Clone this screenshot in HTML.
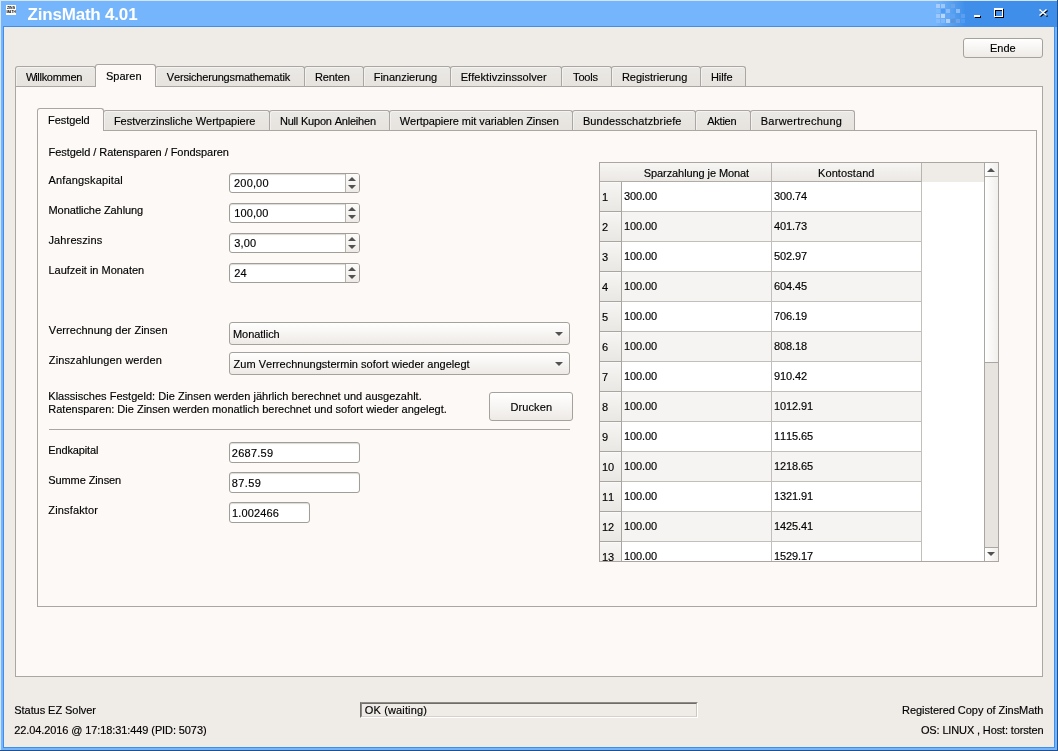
<!DOCTYPE html>
<html lang="de">
<head>
<meta charset="utf-8">
<title>ZinsMath 4.01</title>
<style>
*{box-sizing:border-box;margin:0;padding:0}
html,body{width:1058px;height:751px;overflow:hidden}
body{position:relative;background:#efebe7;font-family:"Liberation Sans",sans-serif;font-size:11px;color:#000;line-height:13px;font-kerning:none;-webkit-text-stroke:0.15px #000}
#root{position:absolute;left:0;top:0;width:1058px;height:751px;will-change:transform;overflow:hidden}
.abs{position:absolute}
#frame{position:absolute;left:0;top:0;width:1058px;height:751px;background:#75b5fb}
#edgeT{position:absolute;left:0;top:0;width:1058px;height:1px;background:#d4e5fa}
#edgeL{position:absolute;left:0;top:0;width:1px;height:751px;background:#d4e5fa}
#edgeR{position:absolute;left:1057px;top:0;width:1px;height:751px;background:#234f8c}
#edgeB{position:absolute;left:0;top:750px;width:1058px;height:1px;background:#234f8c}
#client{position:absolute;left:3px;top:26px;width:1052px;height:722px;background:#efebe7;border:1px solid #3e8eea}
#titlegrad{position:absolute;left:936px;top:1px;width:121px;height:26px;background:linear-gradient(90deg,#75b5fb 0,#3f8fea 29px,#3f8fea 100%)}
#title{-webkit-text-stroke:0;position:absolute;top:5px;font-size:17px;line-height:20px;font-weight:bold;color:#fff;white-space:nowrap}
#appicon{position:absolute;left:6px;top:5px;width:10px;height:10px;font-family:"Liberation Sans",sans-serif}
.lbl{position:absolute;white-space:nowrap;height:13px;line-height:13px}
.btn{position:absolute;border:1px solid #a5a19b;border-radius:3px;background:linear-gradient(#ffffff 0,#f8f6f4 45%,#edeae6 100%);white-space:nowrap}
.btn span{position:absolute;line-height:13px}
.tab{position:absolute;border:1px solid #aaa7a2;border-bottom:none;border-radius:3px 3px 0 0;background:linear-gradient(#ebe9e5,#e6e3df);white-space:nowrap;box-shadow:inset 1px 1px 0 rgba(255,255,255,.45)}
.tab.sel{background:#fcf9f6;z-index:3}
.panel{position:absolute;border:1px solid #aaa7a2;background:#fcf9f6}
.field{position:absolute;border:1px solid #a19d98;border-radius:3px;background:#fff;box-shadow:inset 0 1px 1px #dcdad6;white-space:nowrap}
.field span{position:absolute;top:3px;line-height:13px}
.spinbtn{position:absolute;right:0;top:0;width:14px;height:18px;border-left:1px solid #b5b1ac;background:linear-gradient(#fdfcfb,#eeebe7);border-radius:0 2px 2px 0}
.up{position:absolute;left:2px;top:3px;width:0;height:0;border-left:4px solid transparent;border-right:4px solid transparent;border-bottom:4px solid #525252}
.down{position:absolute;left:2px;top:11px;width:0;height:0;border-left:4px solid transparent;border-right:4px solid transparent;border-top:4px solid #525252}
.combo{position:absolute;border:1px solid #a5a19b;border-radius:3px;background:linear-gradient(#ffffff 0,#f8f6f4 45%,#edeae6 100%);white-space:nowrap}
.combo span{position:absolute;top:5px;line-height:13px}
.combo i{position:absolute;right:6px;top:9px;width:0;height:0;border-left:4px solid transparent;border-right:4px solid transparent;border-top:4px solid #525252}
#tbl{position:absolute;left:599px;top:162px;width:400px;height:400px;border:1px solid #aaa7a2;background:#fff;overflow:hidden}
#tbl .hdr{position:absolute;top:0;height:19px;background:linear-gradient(#f7f6f4,#ebe8e4);border-right:1px solid #b8b5b0;border-bottom:1px solid #b0ada8;white-space:nowrap}
#tbl .hdr span{position:absolute;top:4px;line-height:13px}
#tbl .rh{position:absolute;left:0;width:22px;height:30px;background:linear-gradient(#f7f6f4,#e9e7e3);border-right:1px solid #a9a6a1;border-bottom:1px solid #a9a6a1;box-shadow:inset 0 1px 0 #fbfaf9;padding:9px 0 0 2px;line-height:13px;white-space:nowrap}
#tbl .c{position:absolute;height:30px;border-right:1px solid #c2bfba;border-bottom:1px solid #c2bfba;padding:8px 0 0 2px;line-height:13px;white-space:nowrap;background:#fff}
#tbl .c.alt{background:#f5f4f2}
#okbox{position:absolute;left:360px;top:702px;width:338px;height:16px;border:1px solid;border-color:#8d8a87 #fff #fff #6e6c69;background:#efebe7}
#okbox div{position:absolute;left:0;top:0;width:336px;height:14px;border:1px solid;border-color:#6e6c69 #cbc8c4 #d5d2ce #8b8885}
#ok{position:absolute;top:1px;line-height:13px;white-space:nowrap}
</style>
</head>
<body>
<div id="root">
<div id="frame"></div><div id="titlegrad"></div>
<div id="edgeT"></div><div id="edgeL"></div><div id="edgeR"></div><div id="edgeB"></div>
<svg id="appicon" width="10" height="10" viewBox="0 0 10 10"><rect width="10" height="10" fill="#fff"/><text x="1" y="4.2" font-size="4.4" font-weight="bold" textLength="8" lengthAdjust="spacingAndGlyphs" fill="#000">ZINS</text><text x="0.4" y="8.2" font-size="4.4" font-weight="bold" textLength="9.4" lengthAdjust="spacingAndGlyphs" fill="#000">MATH</text></svg>
<div id="title" style="left:27.50px;letter-spacing:-0.194px">ZinsMath 4.01</div>
<div id="client"></div>
<svg class="abs" style="left:930px;top:0" width="128" height="27" viewBox="0 0 128 27" shape-rendering="crispEdges">
<rect x="6" y="4" width="4" height="4" fill="#a8cdfb"/>
<rect x="11" y="4" width="4" height="4" fill="#9cc8fb"/>
<rect x="21" y="4" width="4" height="4" fill="#6aa5e8"/>
<rect x="6" y="9" width="4" height="4" fill="#7dbafb"/>
<rect x="11" y="9" width="4" height="4" fill="#4d9bf5"/>
<rect x="16" y="9" width="4" height="4" fill="#8cbcf5"/>
<rect x="26" y="9" width="4" height="4" fill="#8cbcf5"/>
<rect x="6" y="14" width="4" height="4" fill="#9dc8fb"/>
<rect x="11" y="14" width="4" height="4" fill="#b8d6fb"/>
<rect x="16" y="14" width="4" height="4" fill="#63a6f5"/>
<rect x="21" y="14" width="4" height="4" fill="#5ea3f3"/>
<rect x="31" y="14" width="4" height="4" fill="#5c9fee"/>
<rect x="6" y="19" width="4" height="4" fill="#85bcfb"/>
<rect x="11" y="19" width="4" height="4" fill="#80b8f8"/>
<rect x="16" y="19" width="4" height="4" fill="#b0d0f8"/>
<rect x="21" y="19" width="4" height="4" fill="#5d94d6"/>
<rect x="26" y="19" width="4" height="4" fill="#6fa5e6"/>
<rect x="31" y="19" width="4" height="4" fill="#4d9bf5"/>
<rect x="45" y="16" width="6" height="2" fill="#000"/>
<rect x="44" y="15" width="6" height="2" fill="#fff"/>
<path d="M65 9h9v9h-9z M66 11v6h7v-6z" fill="#000" fill-rule="evenodd"/>
<path d="M64 8h9v9h-9z M65 10v6h7v-6z" fill="#fff" fill-rule="evenodd"/>
<g shape-rendering="auto"><path d="M110.5 10.5 L117.5 16.5 M117.5 10.5 L110.5 16.5" stroke="#000" stroke-width="1.5" fill="none"/>
<path d="M109.5 9.5 L116.5 15.5 M116.5 9.5 L109.5 15.5" stroke="#fff" stroke-width="1.5" fill="none"/></g>
</svg>
<div class="btn" style="left:963px;top:38px;width:80px;height:20px"><span id="ende" style="left:26.00px;top:3px;letter-spacing:-0.039px">Ende</span></div>
<div class="tab" id="ot0" style="left:15px;top:66px;width:81px;height:20px;padding:4px 0 0 10.00px;z-index:3;letter-spacing:-0.289px"><span style="letter-spacing:-1.2px">W</span>illkommen</div>
<div class="tab sel" id="ot1" style="left:95px;top:64px;width:61px;height:23px;padding:5px 0 0 9.90px;z-index:4;letter-spacing:0.042px">Sparen</div>
<div class="tab" id="ot2" style="left:155px;top:66px;width:150px;height:20px;padding:4px 0 0 10.80px;z-index:3;letter-spacing:-0.171px">Versicherungsmathematik</div>
<div class="tab" id="ot3" style="left:304px;top:66px;width:60px;height:20px;padding:4px 0 0 9.90px;z-index:3;letter-spacing:-0.118px">Renten</div>
<div class="tab" id="ot4" style="left:363px;top:66px;width:88px;height:20px;padding:4px 0 0 9.70px;z-index:3;letter-spacing:-0.013px">Finanzierung</div>
<div class="tab" id="ot5" style="left:450px;top:66px;width:112px;height:20px;padding:4px 0 0 9.70px;z-index:3;letter-spacing:0.057px">Effektivzinssolver</div>
<div class="tab" id="ot6" style="left:561px;top:66px;width:51px;height:20px;padding:4px 0 0 11.00px;z-index:3;letter-spacing:-0.230px"><span style="letter-spacing:-1.3px">T</span>ools</div>
<div class="tab" id="ot7" style="left:611px;top:66px;width:90px;height:20px;padding:4px 0 0 9.90px;z-index:3;letter-spacing:0.001px">Registrierung</div>
<div class="tab" id="ot8" style="left:700px;top:66px;width:46px;height:20px;padding:4px 0 0 9.90px;z-index:3;letter-spacing:-0.076px">Hilfe</div>
<div class="panel" style="left:15px;top:86px;width:1028px;height:591px"></div>
<div class="tab sel" id="it0" style="left:37px;top:108px;width:67px;height:23px;padding:5px 0 0 10.10px;z-index:5;letter-spacing:-0.081px">Festgeld</div>
<div class="tab" id="it1" style="left:103px;top:110px;width:167px;height:20px;padding:4px 0 0 9.90px;z-index:4;letter-spacing:-0.009px">Festverzinsliche Wertpapiere</div>
<div class="tab" id="it2" style="left:269px;top:110px;width:121px;height:20px;padding:4px 0 0 9.90px;z-index:4;letter-spacing:-0.194px">Null Kupon Anleihen</div>
<div class="tab" id="it3" style="left:389px;top:110px;width:184px;height:20px;padding:4px 0 0 9.80px;z-index:4;letter-spacing:-0.078px">Wertpapiere mit variablen Zinsen</div>
<div class="tab" id="it4" style="left:572px;top:110px;width:124px;height:20px;padding:4px 0 0 9.90px;z-index:4;letter-spacing:0.115px">Bundesschatzbriefe</div>
<div class="tab" id="it5" style="left:695px;top:110px;width:56px;height:20px;padding:4px 0 0 11.20px;z-index:4;letter-spacing:-0.235px">Aktien</div>
<div class="tab" id="it6" style="left:750px;top:110px;width:105px;height:20px;padding:4px 0 0 9.70px;z-index:4;letter-spacing:0.279px">Barwertrechung</div>
<div class="panel" style="left:37px;top:130px;width:1000px;height:477px;z-index:2"></div>
<div id="form" style="position:absolute;left:0;top:0;z-index:6">
<div class="lbl" id="l0" style="left:48.50px;top:146px;letter-spacing:-0.053px">Festgeld / Ratensparen / Fondsparen</div>
<div class="lbl" id="l1" style="left:48.50px;top:174px;letter-spacing:0.163px">Anfangskapital</div>
<div class="field" style="left:229px;top:173px;width:131px;height:20px"><span id="v0" style="left:4.10px;letter-spacing:0.153px">200,00</span><div class="spinbtn"><div class="up"></div><div class="down"></div></div></div>
<div class="lbl" id="l2" style="left:48.50px;top:204px;letter-spacing:-0.076px">Monatliche Zahlung</div>
<div class="field" style="left:229px;top:203px;width:131px;height:20px"><span id="v1" style="left:4.30px;letter-spacing:0.093px">100,00</span><div class="spinbtn"><div class="up"></div><div class="down"></div></div></div>
<div class="lbl" id="l3" style="left:48.50px;top:234px;letter-spacing:0.120px">Jahreszins</div>
<div class="field" style="left:229px;top:233px;width:131px;height:20px"><span id="v2" style="left:4.30px;letter-spacing:0.098px">3,00</span><div class="spinbtn"><div class="up"></div><div class="down"></div></div></div>
<div class="lbl" id="l4" style="left:48.50px;top:264px;letter-spacing:-0.017px">Laufzeit in Monaten</div>
<div class="field" style="left:229px;top:263px;width:131px;height:20px"><span id="v3" style="left:4.30px;letter-spacing:0.082px">24</span><div class="spinbtn"><div class="up"></div><div class="down"></div></div></div>
<div class="lbl" id="l5" style="left:48.80px;top:324px;letter-spacing:0.037px">Verrechnung der Zinsen</div>
<div class="combo" style="left:229px;top:322px;width:341px;height:23px"><span id="cb0" style="left:3.00px;letter-spacing:-0.045px">Monatlich</span><i></i></div>
<div class="lbl" id="l6" style="left:48.80px;top:354px;letter-spacing:0.124px">Zinszahlungen werden</div>
<div class="combo" style="left:229px;top:352px;width:341px;height:23px"><span id="cb1" style="left:3.60px;letter-spacing:0.014px">Zum Verrechnungstermin sofort wieder angelegt</span><i></i></div>
<div class="lbl" id="s0" style="left:48.30px;top:390px;letter-spacing:0.023px">Klassisches Festgeld: Die Zinsen werden jährlich berechnet und ausgezahlt.</div>
<div class="lbl" id="s1" style="left:48.30px;top:403px;letter-spacing:-0.002px">Ratensparen: Die Zinsen werden monatlich berechnet und sofort wieder angelegt.</div>
<div class="btn" style="left:489px;top:392px;width:84px;height:29px"><span id="drucken" style="left:20.50px;top:8px;letter-spacing:0.099px">Drucken</span></div>
<div class="abs" style="left:49px;top:429px;width:521px;height:1px;background:#aaa6a1"></div>
<div class="lbl" id="l7" style="left:48.30px;top:444px;letter-spacing:-0.137px">Endkapital</div>
<div class="field" style="left:229px;top:442px;width:131px;height:21px"><span id="o0" style="left:1.80px;top:4px;letter-spacing:0.258px">2687.59</span></div>
<div class="lbl" id="l8" style="left:48.30px;top:474px;letter-spacing:-0.099px">Summe Zinsen</div>
<div class="field" style="left:229px;top:472px;width:131px;height:21px"><span id="o1" style="left:1.80px;top:4px;letter-spacing:0.395px">87.59</span></div>
<div class="lbl" id="l9" style="left:48.30px;top:504px;letter-spacing:0.160px">Zinsfaktor</div>
<div class="field" style="left:229px;top:502px;width:81px;height:21px"><span id="o2" style="left:2.10px;top:4px;letter-spacing:0.133px">1.002466</span></div>
<div id="tbl">
<div class="hdr" style="left:0;width:172px"><span id="h0" style="left:43.80px;letter-spacing:-0.090px">Sparzahlung je Monat</span></div>
<div class="hdr" style="left:172px;width:150px"><span id="h1" style="left:46.00px;letter-spacing:0.090px">Kontostand</span></div>
<div class="abs" style="left:322px;top:0;width:63px;height:19px;background:#efebe7"></div>
<div class="rh" style="top:19px;letter-spacing:-0.118px">1</div>
<div class="c" id="ca0" style="left:22px;top:19px;width:150px;letter-spacing:-0.107px">300.00</div>
<div class="c" id="cb_0" style="left:172px;top:19px;width:150px;letter-spacing:-0.107px">300.74</div>
<div class="rh" style="top:49px;letter-spacing:-0.118px">2</div>
<div class="c alt" id="ca1" style="left:22px;top:49px;width:150px;letter-spacing:-0.107px">100.00</div>
<div class="c alt" id="cb_1" style="left:172px;top:49px;width:150px;letter-spacing:-0.107px">401.73</div>
<div class="rh" style="top:79px;letter-spacing:-0.118px">3</div>
<div class="c" style="left:22px;top:79px;width:150px;letter-spacing:-0.107px">100.00</div>
<div class="c" style="left:172px;top:79px;width:150px;letter-spacing:-0.107px">502.97</div>
<div class="rh" style="top:109px;letter-spacing:-0.118px">4</div>
<div class="c alt" style="left:22px;top:109px;width:150px;letter-spacing:-0.107px">100.00</div>
<div class="c alt" style="left:172px;top:109px;width:150px;letter-spacing:-0.107px">604.45</div>
<div class="rh" style="top:139px;letter-spacing:-0.118px">5</div>
<div class="c" style="left:22px;top:139px;width:150px;letter-spacing:-0.107px">100.00</div>
<div class="c" style="left:172px;top:139px;width:150px;letter-spacing:-0.107px">706.19</div>
<div class="rh" style="top:169px;letter-spacing:-0.118px">6</div>
<div class="c alt" style="left:22px;top:169px;width:150px;letter-spacing:-0.107px">100.00</div>
<div class="c alt" style="left:172px;top:169px;width:150px;letter-spacing:-0.107px">808.18</div>
<div class="rh" style="top:199px;letter-spacing:-0.118px">7</div>
<div class="c" style="left:22px;top:199px;width:150px;letter-spacing:-0.107px">100.00</div>
<div class="c" style="left:172px;top:199px;width:150px;letter-spacing:-0.107px">910.42</div>
<div class="rh" style="top:229px;letter-spacing:-0.118px">8</div>
<div class="c alt" style="left:22px;top:229px;width:150px;letter-spacing:-0.107px">100.00</div>
<div class="c alt" style="left:172px;top:229px;width:150px;letter-spacing:-0.109px">1012.91</div>
<div class="rh" style="top:259px;letter-spacing:-0.118px">9</div>
<div class="c" style="left:22px;top:259px;width:150px;letter-spacing:-0.107px">100.00</div>
<div class="c" style="left:172px;top:259px;width:150px;letter-spacing:-0.109px">1115.65</div>
<div class="rh" style="top:289px;letter-spacing:-0.118px">10</div>
<div class="c alt" style="left:22px;top:289px;width:150px;letter-spacing:-0.107px">100.00</div>
<div class="c alt" style="left:172px;top:289px;width:150px;letter-spacing:-0.109px">1218.65</div>
<div class="rh" style="top:319px;letter-spacing:-0.118px">11</div>
<div class="c" style="left:22px;top:319px;width:150px;letter-spacing:-0.107px">100.00</div>
<div class="c" style="left:172px;top:319px;width:150px;letter-spacing:-0.109px">1321.91</div>
<div class="rh" style="top:349px;letter-spacing:-0.118px">12</div>
<div class="c alt" style="left:22px;top:349px;width:150px;letter-spacing:-0.107px">100.00</div>
<div class="c alt" style="left:172px;top:349px;width:150px;letter-spacing:-0.109px">1425.41</div>
<div class="rh" style="top:379px;letter-spacing:-0.118px">13</div>
<div class="c" style="left:22px;top:379px;width:150px;letter-spacing:-0.107px">100.00</div>
<div class="c" style="left:172px;top:379px;width:150px;letter-spacing:-0.109px">1529.17</div>
<div class="abs" style="left:384px;top:0;width:14px;height:398px;background:#e7e4e0;border-left:1px solid #aaa7a2"></div>
<div class="abs" style="left:385px;top:13px;width:13px;height:187px;background:linear-gradient(90deg,#ffffff,#f1efec);border-top:1px solid #aaa7a2;border-bottom:1px solid #aaa7a2"></div>
<div class="abs" style="left:385px;top:0;width:13px;height:13px;background:linear-gradient(90deg,#ffffff,#f1efec)"><div class="up" style="left:2px;top:5px;border-left-width:4px;border-right-width:4px"></div></div>
<div class="abs" style="left:385px;top:384px;width:13px;height:14px;background:linear-gradient(90deg,#ffffff,#f1efec);border-top:1px solid #aaa7a2"><div class="down" style="left:2px;top:4px;border-left-width:4px;border-right-width:4px"></div></div>
</div>
</div>
<div class="lbl" id="st0" style="left:14.30px;top:704px;letter-spacing:-0.060px">Status EZ Solver</div>
<div class="lbl" id="st1" style="left:14.30px;top:724px;letter-spacing:-0.100px">22.04.2016 @ 17:18:31:449 (PID: 5073)</div>
<div id="okbox"><div></div><span id="ok" style="left:3.80px;letter-spacing:0.139px">OK (waiting)</span></div>
<div class="lbl" id="sr0" style="right:14.60px;top:704px;letter-spacing:-0.040px">Registered Copy of ZinsMath</div>
<div class="lbl" id="sr1" style="right:14.60px;top:724px;letter-spacing:-0.139px">OS: LINUX , Host: torsten</div>
</div>
</body>
</html>
